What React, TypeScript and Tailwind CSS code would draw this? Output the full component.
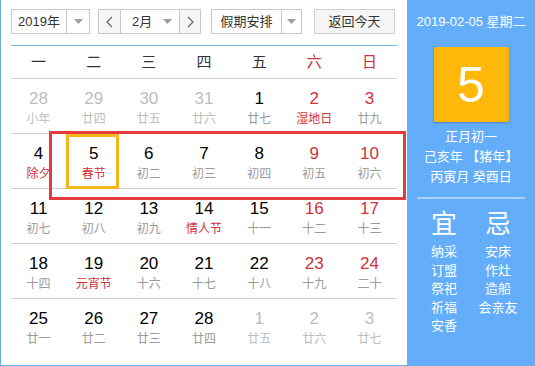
import React from "react";

type Cell = { d: string; l: string; dc?: string; lc?: string; sel?: boolean };

const G = "text-[#bdbdbd]";
const R = "text-[#d1323b]";
const K = "text-black";
const LG = "text-[#9a9a9a]";

const rows: Cell[][] = [
  [
    { d: "28", l: "小年", dc: G, lc: G },
    { d: "29", l: "廿四", dc: G, lc: G },
    { d: "30", l: "廿五", dc: G, lc: G },
    { d: "31", l: "廿六", dc: G, lc: G },
    { d: "1", l: "廿七" },
    { d: "2", l: "湿地日", dc: R, lc: R },
    { d: "3", l: "廿九", dc: R },
  ],
  [
    { d: "4", l: "除夕", lc: R },
    { d: "5", l: "春节", lc: R, sel: true },
    { d: "6", l: "初二" },
    { d: "7", l: "初三" },
    { d: "8", l: "初四" },
    { d: "9", l: "初五", dc: R },
    { d: "10", l: "初六", dc: R },
  ],
  [
    { d: "11", l: "初七" },
    { d: "12", l: "初八" },
    { d: "13", l: "初九" },
    { d: "14", l: "情人节", lc: R },
    { d: "15", l: "十一" },
    { d: "16", l: "十二", dc: R },
    { d: "17", l: "十三", dc: R },
  ],
  [
    { d: "18", l: "十四" },
    { d: "19", l: "元宵节", lc: R },
    { d: "20", l: "十六" },
    { d: "21", l: "十七" },
    { d: "22", l: "十八" },
    { d: "23", l: "十九", dc: R },
    { d: "24", l: "二十", dc: R },
  ],
  [
    { d: "25", l: "廿一" },
    { d: "26", l: "廿二" },
    { d: "27", l: "廿三" },
    { d: "28", l: "廿四" },
    { d: "1", l: "廿五", dc: G, lc: G },
    { d: "2", l: "廿六", dc: G, lc: G },
    { d: "3", l: "廿七", dc: G, lc: G },
  ],
];

const weekdays = ["一", "二", "三", "四", "五", "六", "日"];

function Caret() {
  return (
    <svg width="9" height="5" viewBox="0 0 9 5">
      <path d="M0 0 L9 0 L4.5 5 Z" fill="#9e9e9e" />
    </svg>
  );
}

export default function App() {
  return (
    <div
      className="relative w-[535px] h-[366px] flex border-l border-b border-[#6aaee6] bg-white overflow-hidden"
      style={{ fontFamily: '"Liberation Sans", Arial, "Noto Sans CJK SC", sans-serif' }}
    >
      {/* left part */}
      <div className="w-[406px] pl-[10px] pr-[10px] flex flex-col">
        {/* toolbar */}
        <div className="h-[45px] flex items-start pt-[9px] text-[13px] text-[#333]">
          <div className="w-[79px] h-[25px] border border-[#c8c8c8] flex">
            <div className="w-[54px] flex items-center justify-center">2019年</div>
            <div className="flex-1 border-l border-[#c8c8c8] flex items-center justify-center">
              <Caret />
            </div>
          </div>
          <div className="ml-[8px] w-[103px] h-[25px] border border-[#c8c8c8] flex">
            <div className="w-[21px] bg-[#f6f6f6] flex items-center justify-center text-[#555]">
              <svg width="7" height="12" viewBox="0 0 7 12">
                <path d="M6 1 L1 6 L6 11" stroke="#666" strokeWidth="1.2" fill="none" />
              </svg>
            </div>
            <div className="w-[60px] border-l border-r border-[#c8c8c8] flex items-center pl-[11px]">
              <span>2月</span>
              <span className="ml-auto mr-[7px]">
                <Caret />
              </span>
            </div>
            <div className="flex-1 bg-[#f6f6f6] flex items-center justify-center">
              <svg width="7" height="12" viewBox="0 0 7 12">
                <path d="M1 1 L6 6 L1 11" stroke="#666" strokeWidth="1.2" fill="none" />
              </svg>
            </div>
          </div>
          <div className="ml-[10px] w-[91px] h-[25px] border border-[#c8c8c8] flex">
            <div className="w-[69px] flex items-center justify-center">假期安排</div>
            <div className="flex-1 border-l border-[#c8c8c8] flex items-center justify-center">
              <Caret />
            </div>
          </div>
          <div className="ml-[12px] w-[81px] h-[25px] border border-[#d0d0d0] bg-[#f5f5f5] flex items-center justify-center">
            返回今天
          </div>
        </div>
        {/* blue line */}
        <div className="h-px bg-[#72b6e4]" />
        {/* weekdays */}
        <div className="grid grid-cols-7 h-[33px] border-b border-[#cfcfcf] text-[15px]">
          {weekdays.map((w, i) => (
            <div
              key={w}
              className={`flex items-center justify-center ${i >= 5 ? "text-[#c9303a]" : "text-[#333]"}`}
            >
              {w}
            </div>
          ))}
        </div>
        {/* rows */}
        {rows.map((row, ri) => (
          <div
            key={ri}
            className={`grid grid-cols-7 h-[55px] ${ri < 4 ? "border-b border-[#cfcfcf]" : ""}`}
          >
            {row.map((c, ci) => (
              <div key={ci} className="relative flex flex-col items-center pt-[10px]">
                {c.sel && (
                  <span className="absolute top-0 left-0 right-[2px] bottom-[-1px] border-[3px] border-[#f5b51c]" />
                )}
                <span className={`text-[17px] leading-[20px] ${c.dc ?? K}`}>{c.d}</span>
                <span className={`text-[12px] leading-[20px] ${c.lc ?? LG}`}>{c.l}</span>
              </div>
            ))}
          </div>
        ))}
      </div>

      {/* right panel */}
      <div className="flex-1 bg-[#63adfb] text-white flex flex-col items-stretch">
        <div className="h-[44px] flex items-center justify-center text-[13px]">2019-02-05 星期二</div>
        <div className="mt-[3px] mx-auto w-[75px] h-[75px] bg-[#ffb80a] rounded-[2px] shadow-[0_1px_2px_rgba(0,0,0,0.25)] flex items-center justify-center text-[50px] leading-none">
          5
        </div>
        <div className="mt-[5px] flex flex-col items-center text-[13px] leading-[20px]">
          <span>正月初一</span>
          <span>己亥年 【猪年】</span>
          <span>丙寅月 癸酉日</span>
        </div>
        <div className="mt-[10px] mx-[10px] h-[2px] bg-[#a9d0fb]" />
        <div className="mt-[10px] px-[10px] grid grid-cols-2">
          <div className="flex flex-col items-center">
            <span className="text-[26px] leading-[30px]">宜</span>
            <div className="mt-[4px] flex flex-col items-center text-[13px] leading-[18.5px]">
              <span>纳采</span>
              <span>订盟</span>
              <span>祭祀</span>
              <span>祈福</span>
              <span>安香</span>
            </div>
          </div>
          <div className="flex flex-col items-center">
            <span className="text-[26px] leading-[30px]">忌</span>
            <div className="mt-[4px] flex flex-col items-center text-[13px] leading-[18.5px]">
              <span>安床</span>
              <span>作灶</span>
              <span>造船</span>
              <span>会亲友</span>
            </div>
          </div>
        </div>
      </div>

      {/* red highlight overlay */}
      <div className="absolute left-[48px] top-[131px] w-[357px] h-[69px] border-[3px] border-[#e63b3b] pointer-events-none" />
    </div>
  );
}
